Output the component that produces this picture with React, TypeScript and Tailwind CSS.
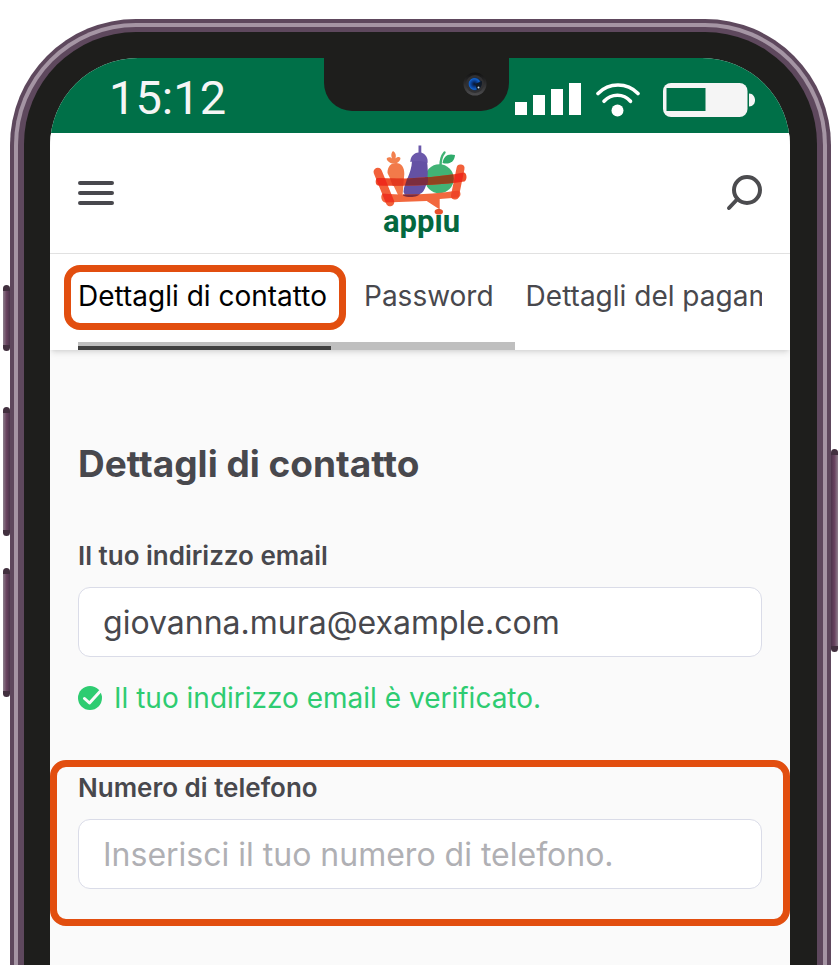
import { useState } from 'react';

const TABS = ['Dettagli di contatto', 'Password', 'Dettagli del pagamento'];

function SignalIcon() {
  return (
    <svg className="w-[66px] h-[34px]" viewBox="0 0 66 34" fill="#fff" aria-hidden="true">
      <rect x="0" y="19" width="12" height="13" />
      <rect x="18" y="12" width="12" height="20" />
      <rect x="36" y="6" width="12" height="26" />
      <rect x="54" y="0" width="12" height="32" />
    </svg>
  );
}

function WifiIcon() {
  return (
    <svg className="w-11 h-[34px]" viewBox="0 0 44 34" fill="none" stroke="#fff" aria-hidden="true">
      <path d="M2 10.5C13 -.8 31 -.8 42 10.5" strokeWidth="3.6" strokeLinecap="round" />
      <path d="M8 18.3C15.5 10.2 27.5 10.2 34.5 18.3" strokeWidth="3.6" strokeLinecap="round" />
      <circle cx="21.5" cy="27.5" r="6" fill="#fff" stroke="none" />
    </svg>
  );
}

function BatteryIcon() {
  return (
    <svg className="w-[92px] h-[34px]" viewBox="0 0 92 34" aria-hidden="true">
      <rect x="0" y="0" width="84.5" height="34" rx="8" fill="#f5f5f5" />
      <rect x="3.5" y="5" width="39" height="23" fill="#007048" />
      <path d="M86 10.5C90 10.5 92 14 92 17.3S90 23.5 86 23.5Z" fill="#f5f5f5" />
    </svg>
  );
}

function MenuIcon() {
  return (
    <svg className="w-9 h-6" viewBox="0 0 36 24" stroke="#48484d" strokeWidth="4" strokeLinecap="round" aria-hidden="true">
      <path d="M2 2H34M2 12H34M2 22H34" />
    </svg>
  );
}

function SearchIcon() {
  return (
    <svg className="w-9 h-9" viewBox="0 0 36 36" fill="none" stroke="#4c4c4f" strokeWidth="4" aria-hidden="true">
      <circle cx="21" cy="15" r="13" />
      <path d="M11.5 24L3 33" strokeLinecap="round" />
    </svg>
  );
}

function CheckIcon() {
  return (
    <svg className="w-6 h-6 shrink-0" viewBox="0 0 24 24" aria-hidden="true">
      <circle cx="12" cy="12" r="12" fill="#2ecc71" />
      <path d="M6.5 12.5L11.5 17L22 5.5" fill="none" stroke="#fafafa" strokeWidth="3" strokeLinecap="round" strokeLinejoin="round" />
    </svg>
  );
}

function Logo() {
  return (
    <svg className="w-24 h-[98px]" viewBox="0 0 96 98" role="img" aria-label="appiu">
      <defs>
        <clipPath id="slat">
          <path d="M5.500 34C35 35.500 65 33.500 92 28.500C95 29 95.500 36 92.500 37.500C65 41.500 35 42.500 6 41.500C3 41 3 35 5.500 34Z" />
        </clipPath>
        <clipPath id="base">
          <path d="M11 49.500C35 52 62 50 86 46.500C89 47 89.500 52 86.500 53.500L67.700 55V65.500L54.700 57L13 58.500C9 58 8 51 11 49.500Z" />
        </clipPath>
      </defs>

      {/* carrot */}
      <path d="M20 19.500C16 18 14 15.500 15 14C17 12.800 19 13.500 20 14.500C18.500 11 19.500 8.500 21 7C23.500 8.500 24.500 11 23.500 14.500C25 12.800 27.500 12.500 28.500 14C28.500 16.500 26.500 18.500 24 19.500Z" fill="#f2804e" />
      <path d="M15.500 29C15.500 23 18.500 19 24 19C29.500 19 32.500 23.500 32.300 30L30.500 52C29.500 55 27.500 55 26.500 52Z" fill="#f27a4a" />
      {/* apple */}
      <circle cx="67.300" cy="34.700" r="14.500" fill="#41b375" />
      <path d="M68.500 22C68.500 17 69.500 12 72.500 8.500" fill="none" stroke="#41b375" strokeWidth="2.400" strokeLinecap="round" />
      <path d="M70.500 19C71.500 12 76 9 83 11C82.500 18 77 21 70.500 19Z" fill="#2fab6b" />
      {/* aubergine */}
      <path d="M31.500 48C32 38 39.500 30 40 17H55C56.500 28 56 40 51.500 47C48 52 38 53 33 51Z" fill="#6451a4" />
      <path d="M38.300 18C38.500 12 42 9 46.500 8.500V1.500H49.300V8.500C53.500 10 56.500 14 55.500 19C50 16.500 44 16.500 38.300 18Z" fill="#6b58aa" />

      {/* crate */}
      <path d="M5.800 28L18 58" stroke="#f2603a" strokeWidth="8.500" strokeLinecap="round" />
      <path d="M88.500 24.500L83 51.500" stroke="#f2603a" strokeWidth="8" strokeLinecap="round" />
      <g clipPath="url(#base)">
        <rect width="96" height="98" fill="#f2683e" />
        <path d="M31 48H50C46 54 36 54 31 51.500Z" fill="#7c2d3f" />
        <path d="M5.800 28L18 58" stroke="#ee3420" strokeWidth="8.500" strokeLinecap="round" />
        <path d="M88.500 24.500L83 51.500" stroke="#ee4628" strokeWidth="8" strokeLinecap="round" />
      </g>
      <g clipPath="url(#slat)">
        <rect width="96" height="98" fill="#ee4e2c" />
        <path d="M15.500 28H32.300L31 45H22Z" fill="#e23a1e" />
        <circle cx="67.300" cy="34.700" r="14.500" fill="#91431f" />
        <path d="M37 28H56V38L54 45H32Z" fill="#7c2d3f" />
        <path d="M5.800 28L18 58" stroke="#ee2b1c" strokeWidth="8.500" />
        <path d="M88.500 24.500L83 51.500" stroke="#ee2b1c" strokeWidth="8" />
      </g>

      <text
        x="11"
        y="88"
        fontSize="31"
        fontWeight="700"
        fill="#04683f"
        className="font-['Roboto',sans-serif]"
      >
        appiu
      </text>
      <ellipse cx="66.800" cy="67.800" rx="4.200" ry="2.800" fill="#e8502c" />
    </svg>
  );
}

function SideButton({ className }: { className: string }) {
  return (
    <span
      className={`absolute w-[7px] rounded-sm bg-gradient-to-r from-[#8c7f8c] via-[#68435f] to-[#4c344b] border-y-6 border-[#42303f] ${className}`}
    />
  );
}

function StatusBar() {
  return (
    <div className="relative h-[75px] bg-[#007048] flex items-end justify-between pl-[59px] pr-[35px] pb-4">
      <span className="font-['Roboto',sans-serif] text-[47px] leading-[38px] text-[#f5f5f5]">15:12</span>
      <div className="absolute top-0 left-[274px] w-[185px] h-[53px] rounded-b-[28px] bg-[#1e1e1c]">
        <svg className="absolute top-3.5 right-[22px] w-6 h-6" viewBox="0 0 24 24" aria-hidden="true">
          <defs>
            <linearGradient id="bezel" x1="0" y1="0" x2="0" y2="1">
              <stop offset="0" stopColor="#111" />
              <stop offset="1" stopColor="#4c4c4e" />
            </linearGradient>
            <radialGradient id="lens" cx=".45" cy=".5" r=".55">
              <stop offset="0" stopColor="#08142e" />
              <stop offset=".45" stopColor="#0b3f93" />
              <stop offset=".75" stopColor="#1261c9" />
              <stop offset="1" stopColor="#091527" />
            </radialGradient>
          </defs>
          <circle cx="12" cy="12" r="11.5" fill="url(#bezel)" />
          <circle cx="12" cy="12" r="9" fill="#303032" />
          <circle cx="12" cy="12" r="6.5" fill="url(#lens)" />
          <path d="M12 12L19 9C19 14 17 17 14 18Z" fill="#101a28" />
          <circle cx="15.5" cy="15.5" r="1" fill="#cfe0ee" />
        </svg>
      </div>
      <div className="flex items-center">
        <SignalIcon />
        <div className="pl-[15px] pr-[23px]">
          <WifiIcon />
        </div>
        <BatteryIcon />
      </div>
    </div>
  );
}

function App() {
  const [activeTab, setActiveTab] = useState(TABS[0]);
  const [email, setEmail] = useState('giovanna.mura@example.com');
  const [phone, setPhone] = useState('');

  return (
    <div className="h-screen overflow-hidden bg-white pt-[19px] pl-[10px] pr-[9px] font-['Inter',sans-serif] text-[#48484d]">
      <div className="relative h-full">
        <SideButton className="-left-[7px] top-[266px] h-[66px]" />
        <SideButton className="-left-[7px] top-[388px] h-[129px]" />
        <SideButton className="-left-[7px] top-[549px] h-[129px]" />
        <SideButton className="-right-[7px] top-[430px] h-[203px] rotate-180" />

        <div className="h-full rounded-t-[126px] bg-[#5e485d] px-1 pt-1">
          <div className="h-full rounded-t-[122px] bg-[#a595a4] px-1 pt-1">
            <div className="h-full rounded-t-[118px] bg-[#5e485d] px-[6px] pt-[5px]">
              <div className="h-full rounded-t-[112px] bg-[#1e1e1c] pl-[26px] pr-[27px] pt-[26px]">
                <div className="h-full rounded-t-[88px] overflow-hidden bg-[#fafafa]">
                  <StatusBar />

                  <header className="h-[121px] flex items-center justify-between px-7 bg-white border-b border-[#e2e2e2]">
                    <button aria-label="Menu">
                      <MenuIcon />
                    </button>
                    <Logo />
                    <button aria-label="Cerca">
                      <SearchIcon />
                    </button>
                  </header>

                  <nav className="relative h-24 px-7 bg-white shadow-md">
                    <div className="flex gap-8 h-full items-start pt-[22px]" role="tablist">
                      {TABS.map((tab) => (
                        <button
                          key={tab}
                          role="tab"
                          aria-selected={activeTab === tab}
                          onClick={() => setActiveTab(tab)}
                          className={`text-[28px] leading-10 whitespace-nowrap text-left ${
                            tab === TABS[2] ? 'min-w-0 overflow-hidden' : 'relative shrink-0'
                          } ${tab === TABS[0] ? 'min-w-[254px]' : ''} ${activeTab === tab ? 'text-black' : ''}`}
                        >
                          {tab}
                          {tab === TABS[0] && (
                            <span className="absolute -inset-x-[14px] -top-[11px] -bottom-[14px] border-[7px] border-[#e24e0f] rounded-2xl" />
                          )}
                        </button>
                      ))}
                    </div>
                    <div className="absolute left-7 bottom-0 w-[437px] h-2 bg-[#bfbfbf] flex items-end">
                      <div className="w-[253px] h-1 bg-[#404040]" />
                    </div>
                  </nav>

                  <main>
                    <section className="px-7 pt-[90px]">
                      <h1 className="text-[37px] leading-[48px] font-bold">Dettagli di contatto</h1>
                      <label htmlFor="email" className="block mt-[52px] text-[26px] leading-8 font-semibold">
                        Il tuo indirizzo email
                      </label>
                      <input
                        id="email"
                        type="email"
                        value={email}
                        onChange={(e) => setEmail(e.target.value)}
                        className="block w-full h-[70px] mt-[15px] px-6 rounded-xl border border-[#dadce8] bg-white text-[32px]"
                      />
                      <p className="flex items-center gap-3 mt-[21px] text-[28px] leading-10 text-[#2ecc71]">
                        <CheckIcon />
                        Il tuo indirizzo email è verificato.
                      </p>
                    </section>

                    <section className="mt-[42px] h-[166px] px-[21px] pt-[5px] border-[7px] border-[#e24e0f] rounded-2xl">
                      <label htmlFor="phone" className="block text-[26px] leading-8 font-semibold">
                        Numero di telefono
                      </label>
                      <input
                        id="phone"
                        type="tel"
                        value={phone}
                        onChange={(e) => setPhone(e.target.value)}
                        placeholder="Inserisci il tuo numero di telefono."
                        className="block w-full h-[70px] mt-[15px] px-6 rounded-xl border border-[#dadce8] bg-white text-[32px] placeholder:text-[#b0b0b4]"
                      />
                    </section>
                  </main>
                </div>
              </div>
            </div>
          </div>
        </div>
      </div>
    </div>
  );
}

export default App;
